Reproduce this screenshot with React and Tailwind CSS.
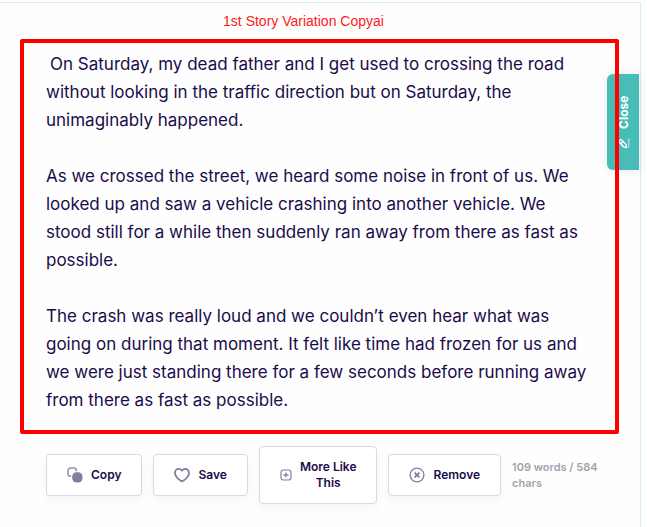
import { clsx } from 'clsx';

const story = [
  [
    'On Saturday, my dead father and I get used to crossing the road',
    'without looking in the traffic direction but on Saturday, the',
    'unimaginably happened.',
  ],
  [
    'As we crossed the street, we heard some noise in front of us. We',
    'looked up and saw a vehicle crashing into another vehicle. We',
    'stood still for a while then suddenly ran away from there as fast as',
    'possible.',
  ],
  [
    'The crash was really loud and we couldn’t even hear what was',
    'going on during that moment. It felt like time had frozen for us and',
    'we were just standing there for a few seconds before running away',
    'from there as fast as possible.',
  ],
];

function CopyIcon() {
  return (
    <svg className="size-4 shrink-0" viewBox="0 0 16 16" fill="none" aria-hidden="true">
      <path
        d="M4.300 9.200H3.800A2.800 2.800 0 0 1 1 6.400V3.800A2.800 2.800 0 0 1 3.800 1h2.800A2.800 2.800 0 0 1 9.400 3.800V4.200"
        stroke="#9a94b4"
        strokeWidth="1.600"
      />
      <rect x="5.200" y="5.200" width="10.300" height="10.300" rx="4.400" fill="#847c9f" />
    </svg>
  );
}

function HeartIcon() {
  return (
    <svg className="size-4 shrink-0" viewBox="0 0 16 16" fill="none" aria-hidden="true">
      <path
        d="M8 3.600C7 2.300 5.900 1.900 4.700 1.900 2.500 1.900 1 3.600 1 5.900c0 3.600 4 7.200 7 8.500 3-1.300 7-4.900 7-8.500 0-2.300-1.500-4-3.700-4C10.100 1.900 9 2.300 8 3.600Z"
        stroke="#847c9f"
        strokeWidth="1.800"
        strokeLinejoin="round"
      />
    </svg>
  );
}

function PlusIcon() {
  return (
    <svg className="size-3 shrink-0" viewBox="0 0 12 12" fill="none" stroke="#847c9f" aria-hidden="true">
      <rect x="1" y="1" width="10" height="10" rx="2.500" strokeWidth="1.200" />
      <path d="M6 3.500v5M3.500 6h5" strokeWidth="1.300" />
    </svg>
  );
}

function RemoveIcon() {
  return (
    <svg className="size-4 shrink-0" viewBox="0 0 16 16" fill="none" stroke="#847c9f" aria-hidden="true">
      <circle cx="8" cy="8" r="6.900" strokeWidth="1.400" />
      <path d="m5.600 5.600 4.800 4.800m0-4.800-4.800 4.800" strokeWidth="1.900" />
    </svg>
  );
}

function PencilIcon() {
  return (
    <svg className="size-3 shrink-0 rotate-90" viewBox="0 0 12 12" fill="none" stroke="#fff" aria-hidden="true">
      <path
        d="M1.500 8.500 2.200 5.700 6.500 1.400a1.300 1.300 0 0 1 1.900 0l.5.5a1.300 1.300 0 0 1 0 1.900L4.500 8.100ZM5.200 2.800l2.300 2.300"
        strokeWidth="1.300"
      />
      <path d="M1.500 10.800h9" opacity=".7" />
    </svg>
  );
}

function ActionButton({ icon, children }) {
  return (
    <button
      type="button"
      className="flex shrink-0 items-center justify-center gap-2 rounded border border-[#dad7e8] bg-white px-5 py-3 text-xs font-semibold text-[#1b0b4b] shadow-[0_4px_8px_rgba(60,120,120,0.06)]"
    >
      {icon}
      {children}
    </button>
  );
}

export default function App() {
  return (
    <div className="min-h-screen bg-[#fdfefe] pt-0.5 pr-1.5 font-['Inter',sans-serif]">
      <main className="relative min-h-screen border-t border-r border-[#dfeadf] bg-[#fefefe] pt-2 pr-[21px] pl-5">
        <h1 className="pr-8 text-center font-['Liberation_Sans',sans-serif] text-sm leading-5 text-[#ff1a1a]">
          1st Story Variation Copyai
        </h1>

        <article className="relative z-10 mt-2 flex flex-col gap-7 rounded-xs border-4 border-[#ff0000] px-[22px] pt-[7px] pb-4 text-[17px] leading-7 whitespace-nowrap text-[#1b0b4b]">
          {story.map((lines, i) => (
            <p key={i}>
              {lines.map((line, j) => (
                <span key={line} className={clsx('block', i === 0 && j === 0 && 'pl-1')}>
                  {line}
                </span>
              ))}
            </p>
          ))}
        </article>

        <button
          type="button"
          className="absolute top-[71px] right-px flex h-24 w-8 rotate-180 items-center justify-center gap-2 rounded-r-md bg-[#48bdb8] pr-0.5 text-xs font-bold text-white shadow-[0_0_8px_rgba(60,120,120,0.15)] [writing-mode:vertical-rl]"
        >
          <PencilIcon />
          Close
        </button>

        <div className="mt-3 flex items-center gap-[11px] pl-[26px]">
          <ActionButton icon={<CopyIcon />}>Copy</ActionButton>
          <ActionButton icon={<HeartIcon />}>Save</ActionButton>
          <ActionButton icon={<PlusIcon />}>
            <span>
              More Like
              <br />
              This
            </span>
          </ActionButton>
          <ActionButton icon={<RemoveIcon />}>Remove</ActionButton>
          <p className="text-[11px] leading-4 font-semibold whitespace-nowrap text-[#a3a3ad]">
            109 words / 584
            <br />
            chars
          </p>
        </div>
      </main>
    </div>
  );
}
